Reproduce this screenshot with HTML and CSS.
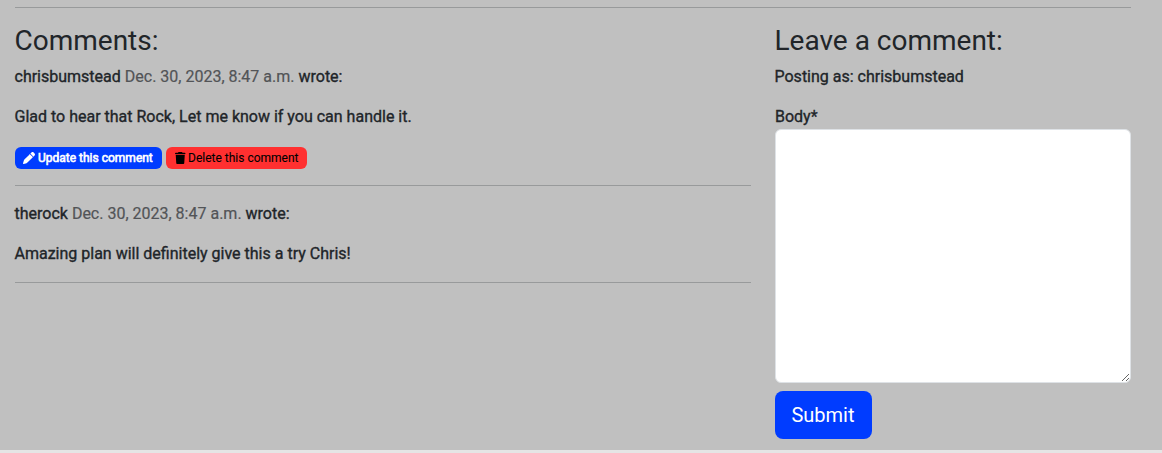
FILE: index.html
```html
<!DOCTYPE html>
<html lang="en">
<head>
<meta charset="utf-8">
<title>Comments</title>
<link rel="stylesheet" href="styles.css">
</head>
<body>
<main class="page">
  <hr class="rule rule-top">
  <div class="columns">
    <section class="comments">
      <h3 class="title">Comments:</h3>
      <article class="comment">
        <p class="meta">chrisbumstead <span class="date">Dec. 30, 2023, 8:47 a.m.</span> wrote:</p>
        <p class="text">Glad to hear that Rock, Let me know if you can handle it.</p>
        <div class="actions">
          <button class="btn update"><svg class="icon" viewBox="0 0 512 512"><path d="M410.3 231l11.3-11.3-33.9-33.9-62.100-62.100L291.700 89.800l-11.300 11.300-22.600 22.600L58.600 322.900c-10.400 10.400-18 23.300-22.200 37.400L1 480.700c-2.500 8.400-.2 17.500 6.100 23.700s15.300 8.500 23.700 6.100l120.300-35.400c14.100-4.200 27-11.800 37.400-22.200L387.700 253.700 410.300 231zM362.700 18.700L314.300 67.100 444.900 197.700l48.400-48.400c25-25 25-65.500 0-90.500L453.300 18.700c-25-25-65.500-25-90.500 0z"/></svg> Update this comment</button>
          <button class="btn delete"><svg class="icon trash" viewBox="0 0 448 512"><path d="M135.200 17.700L128 32H32C14.300 32 0 46.300 0 64S14.300 96 32 96H416c17.700 0 32-14.300 32-32s-14.300-32-32-32H320l-7.200-14.300C307.400 6.800 296.300 0 284.200 0H163.800c-12.100 0-23.200 6.800-28.600 17.700zM416 128H32L53.200 467c1.600 25.300 22.600 45 47.900 45H346.900c25.300 0 46.300-19.700 47.900-45L416 128z"/></svg> Delete this comment</button>
        </div>
      </article>
      <hr class="rule">
      <article class="comment">
        <p class="meta">therock <span class="date">Dec. 30, 2023, 8:47 a.m.</span> wrote:</p>
        <p class="text">Amazing plan will definitely give this a try Chris!</p>
      </article>
      <hr class="rule">
    </section>
    <form class="reply">
      <h3 class="title">Leave a comment:</h3>
      <p class="meta">Posting as: chrisbumstead</p>
      <label class="label" for="body">Body*</label>
      <textarea class="field" id="body"></textarea>
      <button class="submit" type="button">Submit</button>
    </form>
  </div>
</main>
<div class="strip"></div>
</body>
</html>
```
FILE: styles.css
```css
* { box-sizing: border-box; }
body {
  margin: 0;
  height: 453px;
  overflow: hidden;
  background: #c0c0c0;
  color: #212529;
  font: 400 16px/24px Roboto, sans-serif;
  display: flex;
  flex-direction: column;
}
.page { flex: 1; min-height: 0; padding: 7px 31px 0 15px; }
.rule { margin: 16px 0; border: 0; border-top: 1px solid #989a9b; }
.rule-top { margin: 0 0 16px; }
.columns { display: grid; grid-template-columns: 736px 356px; column-gap: 24px; }
.title { margin: 0 0 8px; font-size: 28px; line-height: 33px; font-weight: 400; text-indent: -0.5px; }
.meta, .text { margin: 0 0 16px; text-indent: -0.5px; }
.meta, .text, .label { -webkit-text-stroke: 0.35px currentColor; }
.date { color: #525457; -webkit-text-stroke: 0.2px #525457; }
.actions { display: flex; gap: 4px; padding-top: 2px; }
.btn {
  display: flex;
  align-items: center;
  gap: 3px;
  height: 22px;
  padding: 0 8px;
  border: 0;
  border-radius: 6px;
  font: 400 12px/18px Roboto, sans-serif;
}
.update { width: 147px; background: #003cff; color: #fff; -webkit-text-stroke: 0.6px #fff; }
.delete { width: 141px; padding-left: 9px; background: #ff3030; color: #000; text-indent: -0.5px; -webkit-text-stroke: 0.1px #000; }
.icon { width: 12px; height: 12px; fill: currentColor; }
.trash { width: 10.5px; }
.reply { display: flex; flex-direction: column; align-items: flex-start; }
.field {
  width: 100%;
  height: 254px;
  margin: 0 0 8px;
  border: 1px solid #dee2e6;
  border-radius: 6px;
  background: #fff;
  resize: vertical;
}
.submit {
  width: 97px;
  height: 48px;
  border: 0;
  border-radius: 8px;
  background: #003cff;
  color: #fff;
  font: 400 20px/30px Roboto, sans-serif;
  text-indent: -1px;
}
.strip { height: 3px; background: #e5e5e5; }
```
